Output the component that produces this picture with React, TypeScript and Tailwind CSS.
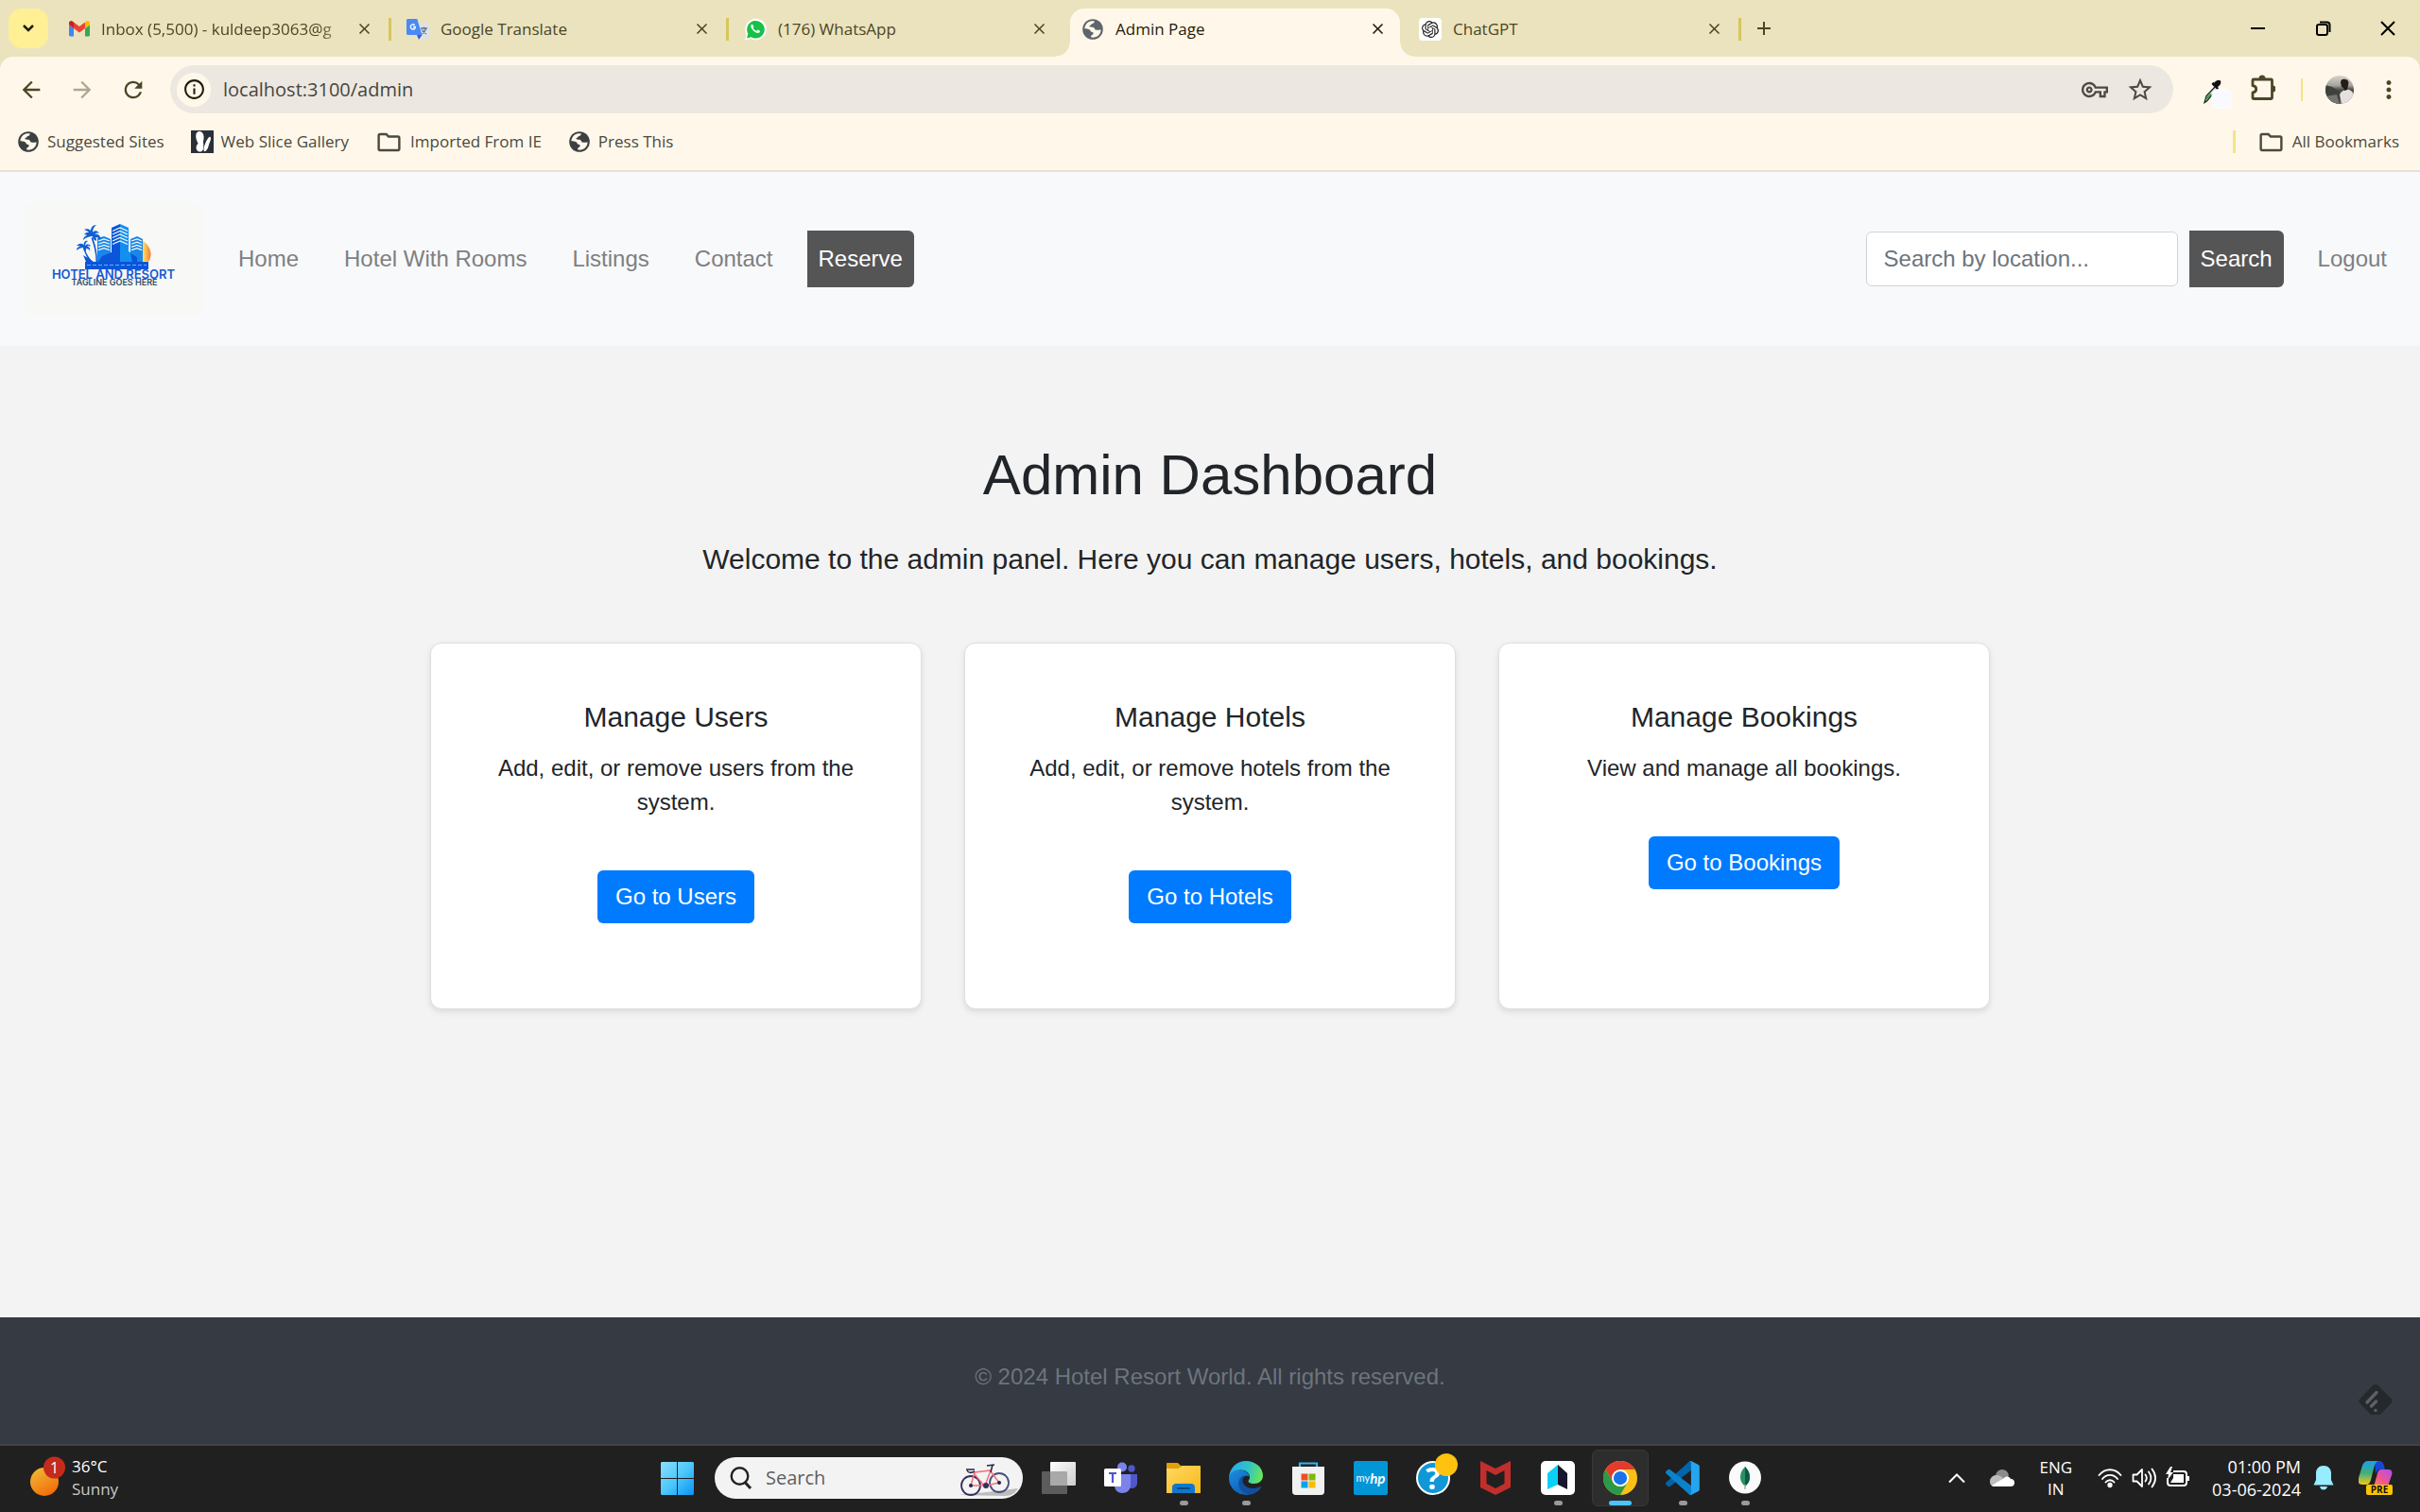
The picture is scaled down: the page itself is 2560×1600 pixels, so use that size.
import React from "react";
import {
  MdArrowBack,
  MdArrowForward,
  MdRefresh,
  MdInfoOutline,
  MdOutlineVpnKey,
  MdStarBorder,
  MdOutlineFolder,
  MdMoreVert,
  MdClose,
  MdAdd,
} from "react-icons/md";
import { SiOpenai } from "react-icons/si";

/* ---------- browser icons ---------- */

function GlobeIcon({ color }: { color: string }) {
  return (
    <svg viewBox="0 0 24 24" className="size-[24px] shrink-0" aria-hidden="true">
      <circle cx="12" cy="12" r="10.8" fill={color} />
      <path
        d="M3.4 11.2c.3-3.900 3-7 6.800-7.900 1.200-.2 2.600-.2 3.600.1-.2 1.400-1 2.200-2.300 2.500-1 .2-1.100 1.500-2 1.800-1 .3-1.500 1.100-.7 1.600 1.300.8 3.100-.1 4.400.9 1 .8.600 2 1.800 2.300 1.900.5 3.900.3 5.500-.3.200 3.700-2.200 7-5.800 8.100-1.600.5-3.200.5-4.700 0 0-1.600.8-2.500 2-2.900 1.100-.4.800-2-.3-2.300-1.600-.4-2.300-1.400-2.600-2.700-1.500-.3-2.400-1.500-5.700-1.200z"
        fill="#fff8ea"
      />
    </svg>
  );
}

function GmailIcon() {
  return (
    <svg viewBox="52 42 88 66" className="w-[22px] shrink-0" aria-hidden="true">
      <path fill="#4285f4" d="M58 108h14V74L52 59v43c0 3.320 2.690 6 6 6" />
      <path fill="#34a853" d="M120 108h14c3.320 0 6-2.690 6-6V59l-20 15" />
      <path fill="#fbbc04" d="M120 48v26l20-15v-8c0-7.420-8.470-11.650-14.400-7.200" />
      <path fill="#ea4335" d="M72 74V48l24 18 24-18v26L96 92" />
      <path fill="#c5221f" d="M52 51v8l20 15V48l-5.600-4.200c-5.940-4.450-14.400-.22-14.400 7.200" />
    </svg>
  );
}

function TranslateIcon() {
  return (
    <svg viewBox="0 0 24 24" className="size-[24px] shrink-0" aria-hidden="true">
      <path d="M10 6h12.500c.8 0 1.500.7 1.500 1.500v13c0 .8-.7 1.500-1.500 1.500H14z" fill="#dfe1e5" />
      <path d="M11 18h5.500L13 23z" fill="#3a5bd0" />
      <path d="M1.500 1h9.800l5.200 17H1.500C.7 18 0 17.300 0 16.500v-14C0 1.700.7 1 1.500 1z" fill="#4a8af4" />
      <path d="M10 8.800H7v1.300h1.600c-.2.800-.8 1.200-1.600 1.200a1.900 1.900 0 1 1 1.200-3.300l1-1A3.300 3.300 0 1 0 7 12.700c1.900 0 3.200-1.400 3-3.900z" fill="#fff" />
      <path d="M15 11h7M18.500 9.500V11M20.500 11c-.5 2.500-2 4.500-4 6M16.500 12.500c.8 2 2.500 3.500 4.500 4.500" stroke="#5f7190" strokeWidth="1.300" fill="none" />
    </svg>
  );
}

function WhatsAppIcon() {
  return (
    <svg viewBox="0 0 24 24" className="size-[24px] shrink-0" aria-hidden="true">
      <path d="M1 23.500l1.700-6A11.300 11.300 0 1 1 7.200 22z" fill="#fff" />
      <path d="M3 21.500l1.300-4.700A9.300 9.300 0 1 1 7.700 20.300z" fill="#16c146" />
      <path
        d="M9.300 7.200c-.3-.6-.9-.6-1.300-.2-1.300 1.200-1.100 3.200 1.600 6 2.900 3.100 5.200 3.500 6.500 2.600.9-.7 1.200-1.600.9-1.900l-2.200-1.100c-.5-.2-.8.900-1.400 1.200-.9.100-3.600-2.200-3.700-3.200.1-.4.800-.9.700-1.400z"
        fill="#fff"
      />
    </svg>
  );
}

function ChatGptIcon() {
  return (
    <span className="flex size-[24px] shrink-0 items-center justify-center rounded-[4px] bg-white">
      <SiOpenai className="size-[18px] text-[#222]" />
    </span>
  );
}

function WebSliceIcon() {
  return (
    <svg viewBox="0 0 24 24" className="size-[24px] shrink-0" aria-hidden="true">
      <rect width="24" height="24" fill="#2a2f36" />
      <path d="M9 1c3.500.3 5 4 4.500 8-.3 2-.7 2.500-.4 4.500.5 3 .4 8.500-2.600 9-3 .6-5-2-5-4.500 0-2 1.500-3 2-4.500C6 11 4.800 7.500 5.300 4.500 5.700 2.300 7 1 9 1z" fill="#fff" />
      <path d="M20.500 7c1.200 1 .2 4-.8 6s-.7 3.500-2 6-2.700 3.800-3.800 2.800c-1-1.300.1-5 1.300-8 1.300-3.300 3.800-8 5.300-6.800z" fill="#fff" />
    </svg>
  );
}

function RestoreIcon() {
  return (
    <svg viewBox="0 0 16 16" className="size-[16px]" fill="none" stroke="#000" strokeWidth="2" aria-hidden="true">
      <rect x="1" y="4" width="11" height="11" rx="2" />
      <path d="M4 1.500h7.500a3 3 0 0 1 3 3V12" />
    </svg>
  );
}

function WindowCloseIcon() {
  return (
    <svg viewBox="0 0 16 16" className="size-[16px]" stroke="#000" strokeWidth="2" aria-hidden="true">
      <path d="M1 1l14 14M15 1L1 15" />
    </svg>
  );
}

function ExtensionsIcon() {
  return (
    <svg viewBox="0 0 26 28" className="h-[28px] w-[26px]" fill="none" aria-hidden="true">
      <path
        d="M3 5h18.500c.6 0 1 .4 1 1v18.500c0 .6-.4 1-1 1H3c-.6 0-1-.4-1-1v-5.700c2.300-.3 3.700-1.700 3.700-3.600S4.300 12 2 11.700V6c0-.6.4-1 1-1z"
        stroke="#4b4626"
        strokeWidth="2.800"
        strokeLinejoin="round"
      />
      <path d="M8.500 4a3.500 3.500 0 0 1 7 0zM23 11.500a3.500 3.500 0 0 1 0 7z" fill="#4b4626" />
    </svg>
  );
}

function EyedropperIcon() {
  return (
    <svg viewBox="0 0 30 34" className="h-[34px] w-[30px]" aria-hidden="true">
      <path d="M13 11L4 20.500 2 27.500l2.500-1.500L14.500 14" fill="#cfe8d4" stroke="#222" strokeWidth="1.300" />
      <path d="M8 18l-4 4-1 4 2-2 5-5z" fill="#2fa14f" />
      <path d="M9.500 8l6 6 1.500-1.500-1-1.500c3-2 4-4.500 3-6.500-1.500-1.500-4.500-1-6.500 2L11 6z" fill="#111" />
      <rect x="10" y="14" width="20" height="20" rx="5" fill="#f8faff" stroke="#fff" />
    </svg>
  );
}

function Avatar() {
  return (
    <svg viewBox="0 0 30 30" className="size-[30px]" role="img" aria-label="Profile">
      <defs>
        <clipPath id="av">
          <circle cx="15" cy="15" r="15" />
        </clipPath>
        <linearGradient id="avbg" x1="0" y1="0" x2="0" y2="1">
          <stop offset="0" stopColor="#d9d4cf" />
          <stop offset=".35" stopColor="#a8a29c" />
          <stop offset=".5" stopColor="#4a4b46" />
          <stop offset="1" stopColor="#5c5e57" />
        </linearGradient>
      </defs>
      <g clipPath="url(#av)">
        <rect width="30" height="30" fill="url(#avbg)" />
        <path d="M0 10l7 2 8 5v13H0z" fill="#3f423b" />
        <path d="M0 22l12-2 3 10H0z" fill="#75776f" />
        <path d="M15 20c2-4 6-6 10-5 3 1 5 4 5 7v8H17z" fill="#e6dfe0" />
        <path d="M16 7c0-3 3-4 5-3 3 0 4 3 3 6l-1 5-3 1-1-3-2-1z" fill="#231c1a" />
      </g>
    </svg>
  );
}

/* ---------- browser chrome ---------- */

type TabInfo = { title: string; icon: React.ReactNode; active?: boolean; fade?: boolean; line?: boolean };

const tabs: TabInfo[] = [
  { title: "Inbox (5,500) - kuldeep3063@g", icon: <GmailIcon />, fade: true, line: true },
  { title: "Google Translate", icon: <TranslateIcon />, line: true },
  { title: "(176) WhatsApp", icon: <WhatsAppIcon /> },
  { title: "Admin Page", icon: <GlobeIcon color="#5f656d" />, active: true },
  { title: "ChatGPT", icon: <ChatGptIcon />, line: true },
];

function Tab({ title, icon, active, fade, line }: TabInfo) {
  return (
    <div
      className={
        active
          ? "relative mx-1 mt-[9px] flex h-[51px] w-[349px] items-center rounded-t-[15px] bg-[#fff8ea] pr-[9px] pb-2 pl-3 text-[#1f1c0a]"
          : "relative mt-[9px] flex h-[51px] w-[357px] items-center pr-[14px] pb-2 pl-4 text-[#4b4626]"
      }
    >
      {active && (
        <>
          <span className="absolute bottom-0 -left-[15px] size-[15px] bg-[radial-gradient(circle_at_0_0,transparent_14px,#fff8ea_15px)]" />
          <span className="absolute -right-[15px] bottom-0 size-[15px] bg-[radial-gradient(circle_at_100%_0,transparent_14px,#fff8ea_15px)]" />
        </>
      )}
      {icon}
      <span
        className={
          fade
            ? "ml-3 flex-1 whitespace-nowrap [mask-image:linear-gradient(to_right,#000_88%,transparent)]"
            : "ml-3 flex-1 whitespace-nowrap"
        }
      >
        {title}
      </span>
      <button type="button" aria-label={`Close ${title}`} className="flex size-[30px] items-center justify-center">
        <MdClose className="size-[19px]" />
      </button>
      {line && <span className="absolute top-[10px] right-0 h-[24px] w-[3px] bg-[#d6c65c]" />}
    </div>
  );
}

function TabStrip() {
  return (
    <div className="flex h-[60px] bg-[#ebe3be]">
      <button type="button" aria-label="Search tabs" className="mt-[9px] ml-[9px] flex h-[42px] w-[42px] items-center justify-center rounded-[14px] bg-[#fff095]">
        <svg viewBox="0 0 14 10" className="w-[14px]" fill="none" stroke="#1f1c0a" strokeWidth="2.500" aria-hidden="true">
          <path d="M2 2l5 5 5-5" />
        </svg>
      </button>
      <div className="ml-[6px] flex">
        {tabs.map((t) => (
          <Tab key={t.title} {...t} />
        ))}
      </div>
      <button type="button" aria-label="New tab" className="ml-3 flex h-[60px] w-[24px] items-center justify-center text-[#4b4626]">
        <MdAdd className="size-[24px] shrink-0" />
      </button>
      <div className="ml-auto flex h-[60px] items-center">
        <button type="button" aria-label="Minimize" className="flex h-[60px] w-[69px] items-center justify-center">
          <span className="h-[2px] w-[15px] bg-black" />
        </button>
        <button type="button" aria-label="Restore" className="flex h-[60px] w-[69px] items-center justify-center">
          <RestoreIcon />
        </button>
        <button type="button" aria-label="Close window" className="flex h-[60px] w-[68px] items-center justify-center">
          <WindowCloseIcon />
        </button>
      </div>
    </div>
  );
}

function Toolbar() {
  return (
    <div className="flex h-[69px] items-center pr-[18px] pl-[19px] text-[#4b4626]">
      <div className="flex gap-[26px]">
        <button type="button" aria-label="Back"><MdArrowBack className="size-[28px]" /></button>
        <button type="button" aria-label="Forward"><MdArrowForward className="size-[28px] text-[#aca88f]" /></button>
        <button type="button" aria-label="Reload"><MdRefresh className="size-[28px]" /></button>
      </div>
      <div className="ml-[25px] flex h-[51px] flex-1 items-center rounded-full bg-[#ece8e1] pr-[20px] pl-[7px]">
        <button type="button" aria-label="Site information" className="flex size-[36px] items-center justify-center rounded-full bg-[#fff8ea] text-[#1f1c0a]">
          <MdInfoOutline className="size-[25px]" />
        </button>
        <input
          aria-label="Address"
          defaultValue="localhost:3100/admin"
          className="ml-[13px] min-w-0 flex-1 bg-transparent text-[20px] text-[#474540] outline-none"
        />
        <button type="button" aria-label="Passwords"><MdOutlineVpnKey className="size-[28px] text-[#4d4a42]" /></button>
        <button type="button" aria-label="Bookmark this page" className="ml-[19px]"><MdStarBorder className="size-[30px] text-[#4d4a42]" /></button>
      </div>
      <button type="button" aria-label="Color picker" className="ml-[31px] pt-[6px]"><EyedropperIcon /></button>
      <button type="button" aria-label="Extensions" className="ml-[21px] pb-1"><ExtensionsIcon /></button>
      <span className="ml-[27px] h-[24px] w-[2px] bg-[#f3e485]" />
      <button type="button" aria-label="Profile" className="ml-[24px]"><Avatar /></button>
      <button type="button" aria-label="Menu" className="ml-[22px]"><MdMoreVert className="size-[30px]" /></button>
    </div>
  );
}

function Bookmarks() {
  return (
    <nav aria-label="Bookmarks" className="flex h-[51px] items-center pr-[22px] pb-[9px] pl-[18px] text-[17px] text-[#4b4840]">
      <a href="#suggested" className="flex items-center gap-2"><GlobeIcon color="#3c4043" />Suggested Sites</a>
      <a href="#slice" className="ml-[28px] flex items-center gap-2"><WebSliceIcon />Web Slice Gallery</a>
      <a href="#ie" className="ml-[28px] flex items-center gap-2"><MdOutlineFolder className="size-[29px]" />Imported From IE</a>
      <a href="#press" className="ml-[28px] flex items-center gap-2"><GlobeIcon color="#3c4043" />Press This</a>
      <span className="ml-auto h-[24px] w-[3px] bg-[#f3e485]" />
      <a href="#all" className="ml-[23px] flex items-center gap-2"><MdOutlineFolder className="size-[29px]" />All Bookmarks</a>
    </nav>
  );
}

/* ---------- hotel site ---------- */

function HotelLogo() {
  const rows = [0, 1, 2, 3, 4, 5];
  return (
    <svg viewBox="0 0 192 120" className="h-[120px] w-[192px] rounded-[12px] bg-[#f8f8f6]" role="img" aria-label="Hotel and Resort">
      <defs>
        <linearGradient id="sun" x1="0" x2="1">
          <stop offset="0" stopColor="#ffe45c" />
          <stop offset="1" stopColor="#f9793a" />
        </linearGradient>
      </defs>
      <path d="M127 41c5 3 8 8 8.500 13 .2 3-.5 6-2 8.500H127z" fill="url(#sun)" />
      <path d="M94 27l9-4v40h-9z" fill="#0a55d8" />
      <path d="M103 23l9 4v36h-9z" fill="#1290f0" />
      <path d="M79 38l7-2 7 3v24H79z" fill="#1a86ea" />
      <path d="M84 57l10-4v10H80z" fill="#0a55d8" />
      <path d="M114 39l7-3 6 3v24h-13z" fill="#1a86ea" />
      <path d="M112 52l9 5v6h-9z" fill="#1290f0" />
      <path d="M114 54l7 4v5h-5z" fill="#0a55d8" />
      <g stroke="#f8f8f6" strokeWidth="1.200" fill="none">
        {rows.slice(0, 5).map((r) => (
          <path key={r} d={`M95 ${30.5 + r * 3.5}l8-3.500 8 3.500`} />
        ))}
        {rows.slice(0, 4).map((r) => (
          <path key={`l${r}`} d={`M80 ${41 + r * 3.2}l6-2 6 2`} />
        ))}
        {rows.slice(0, 4).map((r) => (
          <path key={`r${r}`} d={`M115 ${41 + r * 3.2}l6-2 5 2`} />
        ))}
      </g>
      <path d="M64 56l11 7h-8zM74 37c3 8 5 17 5 26h-1.500c0-9-2-17-5-25z" fill="#0a55d8" />
      <path d="M65 48c2 6 5 11 9 15h-3c-3-4-5-9-7-14z" fill="#0a55d8" />
      <path d="M74 35c-2-4-6-4-9-1 2 0 3 1 3 1-3 1-4 3-4 5 3-3 7-4 10-4 0 2 1 4 4 5 0-2 0-3-1-4 3 0 5 2 5 3 1-4-2-7-6-6 1-1 3-2 5-1-2-4-6-3-7-1 0-3 1-6 4-8-4 0-6 3-6 6-2-2-5-2-7-1 3 1 6 3 9 6z" fill="#0f5fd6" />
      <path d="M65 46c-1-3-5-3-8 0 2 0 3 0 4 1-3 0-4 2-4 4 2-2 5-3 7-3 0 2 1 3 3 4v-3c2 0 4 1 4 3 1-3-1-5-3-6 2 0 3 0 4 1-1-3-4-3-6-1 0-2 1-4 3-5-3-1-5 2-4 5z" fill="#0f5fd6" />
      <rect x="66" y="63" width="67" height="8" fill="#0a55d8" />
      <path d="M68 66.500h63" stroke="#5fb4ff" strokeDasharray="4 2" />
      <text x="96" y="81" textAnchor="middle" fontSize="13" fontWeight="600" fill="#1559d6" className="font-[Inter,sans-serif]">
        HOTEL AND RESORT
      </text>
      <text x="97" y="88" textAnchor="middle" fontSize="9" fontWeight="600" fill="#2d4d68" className="font-[Inter,sans-serif]">
        TAGLINE GOES HERE
      </text>
    </svg>
  );
}

const navLinks = ["Home", "Hotel With Rooms", "Listings", "Contact"];

function SiteHeader() {
  return (
    <header className="flex items-center bg-[#f8f9fb] py-8 pr-[23px] pl-6 text-[24px] leading-[36px] text-[#7f7f80]">
      <a href="#home" className="mr-6"><HotelLogo /></a>
      <nav className="flex items-center gap-6" aria-label="Main">
        {navLinks.map((l) => (
          <a key={l} href={`#${l}`} className="px-3 py-3">{l}</a>
        ))}
        <a href="#reserve" className="rounded-r-[6px] bg-[#555] px-3 py-3 text-white">Reserve</a>
      </nav>
      <form className="ml-auto flex items-center gap-3" onSubmit={(e) => e.preventDefault()}>
        <input
          aria-label="Search by location"
          placeholder="Search by location..."
          className="h-[58px] w-[330px] rounded-[6px] border border-[#ced4da] bg-white px-[18px] text-[#495057] placeholder:text-[#6c757d]"
        />
        <button type="submit" className="rounded-r-[6px] bg-[#555] px-3 py-3 text-white">Search</button>
      </form>
      <a href="#logout" className="ml-6 px-3 py-3">Logout</a>
    </header>
  );
}

const cards = [
  { title: "Manage Users", text: "Add, edit, or remove users from the system.", action: "Go to Users" },
  { title: "Manage Hotels", text: "Add, edit, or remove hotels from the system.", action: "Go to Hotels" },
  { title: "Manage Bookings", text: "View and manage all bookings.", action: "Go to Bookings" },
];

function Dashboard() {
  return (
    <main className="flex-1 bg-[#f3f3f3] px-6 pt-[101px] text-center text-[#212529]">
      <h1 className="text-[60px] leading-[72px]">Admin Dashboard</h1>
      <p className="mt-[31px] text-[30px] leading-[44px]">
        Welcome to the admin panel. Here you can manage users, hotels, and bookings.
      </p>
      <div className="mx-auto mt-[66px] grid max-w-[1650px] grid-cols-3 gap-[45px]">
        {cards.map((c) => (
          <section key={c.title} className="rounded-[12px] border border-[#dfdfdf] bg-white px-[60px] pt-[60px] pb-[90px] shadow-[0_3px_6px_rgba(0,0,0,0.1)]">
            <h2 className="text-[30px] leading-[36px]">{c.title}</h2>
            <p className="mt-[18px] text-[24px] leading-[36px]">{c.text}</p>
            <a href={`#${c.action}`} className="mt-[54px] inline-block rounded-[6px] bg-[#007bff] px-[19px] py-[10px] text-[24px] leading-[36px] text-white">
              {c.action}
            </a>
          </section>
        ))}
      </div>
    </main>
  );
}

function SiteFooter() {
  return (
    <footer className="relative bg-[#363a43] pt-[45px] pb-[53px] text-center text-[24px] leading-[36px] text-[#6c757d]">
      <p>© 2024 Hotel Resort World. All rights reserved.</p>
      <svg viewBox="0 0 36 34" className="absolute right-[29px] bottom-[30px] h-[34px] w-[36px]" aria-hidden="true">
        <path d="M15 2.200c1.700-1.700 4.300-1.700 6 0L34.500 16c1.500 1.500 1.500 3.500 0 5L23 33H13L1.500 21c-1.500-1.500-1.500-3.500 0-5z" fill="#25282d" />
        <g stroke="#5d6066" strokeWidth="3.500" strokeLinecap="round">
          <path d="M9 20L19 9.500M13.500 24l5-5M18 28.500v0" />
        </g>
      </svg>
    </footer>
  );
}

/* ---------- taskbar ---------- */

function BikeIcon() {
  return (
    <svg viewBox="0 0 64 44" className="h-[44px] w-[64px] shrink-0" fill="none" aria-hidden="true">
      <path d="M0 40l30-3 33-4c-3 5-7 8-14 8z" fill="#bdbdbd" />
      <circle cx="13" cy="30" r="10" stroke="#342f5c" strokeWidth="1.800" />
      <circle cx="43" cy="27" r="10" stroke="#47507f" strokeWidth="1.800" />
      <path d="M13 30l4-14 17-2-6 16zM17 18l10 12M34 15l9 12-14 3" stroke="#f3717c" strokeWidth="1.500" />
      <path d="M9 14c2 4 6 2 8 1M8 13h9M34 16l2-8M30 9l8-1" stroke="#272244" strokeWidth="1.500" />
      <circle cx="29" cy="30" r="3" fill="#33305a" />
      <circle cx="13" cy="30" r="2" fill="#272244" />
      <circle cx="43" cy="27" r="2" fill="#272244" />
    </svg>
  );
}

function TaskViewIcon() {
  return (
    <svg viewBox="0 0 36 36" className="size-[36px]" aria-hidden="true">
      <defs>
        <linearGradient id="tv" x1="0" y1="0" x2="1" y2="1">
          <stop offset="0" stopColor="#fff" />
          <stop offset="1" stopColor="#ccc" />
        </linearGradient>
      </defs>
      <rect x="0" y="11" width="27" height="24" rx="1" fill="#5c5c5c" />
      <rect x="9" y="1" width="27" height="25" rx="1" fill="url(#tv)" />
      <path d="M9 11h18v15H9z" fill="#a9a9a9" />
    </svg>
  );
}

function TeamsIcon() {
  return (
    <svg viewBox="0 0 36 36" className="size-[36px]" aria-hidden="true">
      <circle cx="29" cy="8" r="3.700" fill="#4f57c9" />
      <circle cx="19" cy="6.500" r="5" fill="#7b83eb" />
      <path d="M25 14h10v9c0 4-3 6-6 6s-4-1-4-1z" fill="#4f57c9" />
      <path d="M11 14h17v11c0 6-4 9-9 9-4 0-8-3-8-8z" fill="#7b83eb" />
      <rect x="0" y="8" width="18" height="19" rx="1.500" fill="#fff" />
      <path d="M5 13h8M9 13v10" stroke="#4f57c9" strokeWidth="2.200" />
    </svg>
  );
}

function ExplorerIcon() {
  return (
    <svg viewBox="0 0 36 36" className="size-[36px]" aria-hidden="true">
      <defs>
        <linearGradient id="fe" x1="0" y1="0" x2="1" y2="1">
          <stop offset="0" stopColor="#ffd865" />
          <stop offset="1" stopColor="#f9b916" />
        </linearGradient>
      </defs>
      <path d="M0 3c0-.8.500-1 1-1h11l4 4H36v4H0z" fill="#e2a008" />
      <path d="M0 8h13l3-3h19c.6 0 1 .4 1 1v28H0z" fill="url(#fe)" />
      <path d="M6 34v-6c0-3 2-4 4-4h16c3 0 4 2 4 4v6z" fill="#1277cc" />
      <path d="M11 29h14" stroke="#0b4a86" strokeWidth="2" />
    </svg>
  );
}

function EdgeIcon() {
  return (
    <svg viewBox="0 0 36 36" className="size-[36px]" aria-hidden="true">
      <defs>
        <linearGradient id="e1" x1="0" y1=".3" x2="1" y2=".5">
          <stop offset="0" stopColor="#2aa8ea" />
          <stop offset=".55" stopColor="#2fc4c8" />
          <stop offset="1" stopColor="#6be655" />
        </linearGradient>
        <linearGradient id="e2" x1="0" y1="0" x2=".6" y2="1">
          <stop offset="0" stopColor="#1b8fe0" />
          <stop offset="1" stopColor="#0f5fb8" />
        </linearGradient>
      </defs>
      <path d="M0 17C1 7 8.500 0 18 0c10 0 18 7 18 15.500 0 5.500-4.500 8.500-9 8.500-4 0-6.500-1.300-6.500-2.600 0-.9 1.500-1.600 1.500-4.400 0-4-4-7.500-9.500-7.500C6 9.500 1.500 13 0 17z" fill="url(#e1)" />
      <path d="M0 18c0-5 6-9 12-8.500 5.500.4 9 3.500 9.500 7C17 14 12 18 12 23c0 7 6 12 11 12.500C11 38 0 30 0 18z" fill="url(#e2)" />
      <path d="M11 20c-3 7 3 15 12 15.500 5-1 9-4 11-7.500.4-.7-.3-1.200-1-.8-8 4-18 1-18.500-6.200 0-2.500 1.500-4.500 3.500-5.500-3-.5-5.800 1.500-7 4.500z" fill="#124f9e" />
    </svg>
  );
}

function StoreIcon() {
  return (
    <svg viewBox="0 0 36 36" className="size-[36px]" aria-hidden="true">
      <path d="M9 8V2.500h18V8" fill="none" stroke="#35b3f3" strokeWidth="2.200" />
      <path d="M1 6h34v26c0 2.500-1 4-4 4H5c-3 0-4-1.500-4-4z" fill="#f1f1f1" />
      <path d="M10.500 13.500h7v7h-7z" fill="#f04e23" />
      <path d="M18.500 13.500h7v7h-7z" fill="#7fba00" />
      <path d="M10.500 21.500h7v7h-7z" fill="#00a4ef" />
      <path d="M18.500 21.500h7v7h-7z" fill="#ffb900" />
    </svg>
  );
}

function MyHpIcon() {
  return (
    <span className="flex size-[36px] items-center justify-center rounded-[2px] bg-[#0396d6] font-[Lato,sans-serif] text-[11px] text-white">
      my<b className="text-[15px] italic">hp</b>
    </span>
  );
}

function HelpIcon() {
  return (
    <span className="relative flex size-[36px] items-center justify-center rounded-full border-2 border-white bg-[#0f97d7] font-['Open_Sans',sans-serif] text-[32px] leading-none font-bold text-white">
      ?
      <span className="absolute -top-[10px] -right-[10px] size-[24px] rounded-full bg-[#ffc20e]" />
    </span>
  );
}

function McAfeeIcon() {
  return (
    <svg viewBox="0 0 36 36" className="size-[36px]" aria-hidden="true">
      <path d="M2 0l16 8L34 0v28l-16 8-16-8zM8.500 10v14L18 29l9.500-5V10L18 15z" fill="#c12e2c" fillRule="evenodd" />
    </svg>
  );
}

function PanelAppIcon() {
  return (
    <svg viewBox="0 0 36 36" className="size-[36px]" aria-hidden="true">
      <rect width="36" height="36" rx="5" fill="#fff" />
      <path d="M18 4v21L7 30V13z" fill="#0bd0f5" />
      <path d="M18 4l10 9v17l-10-5z" fill="#17172c" />
    </svg>
  );
}

function ChromeIcon() {
  return (
    <svg viewBox="0 0 48 48" className="size-[36px]" aria-hidden="true">
      <circle cx="24" cy="24" r="24" fill="#fbc116" />
      <path d="M24 12h20.800A24 24 0 0 0 3.200 12l10.400 18z" fill="#e33b2e" />
      <path d="M3.200 12A24 24 0 0 0 24 48l10.400-18A12 12 0 0 1 13.600 30z" fill="#2a9a48" />
      <circle cx="24" cy="24" r="12" fill="#fff" />
      <circle cx="24" cy="24" r="9.500" fill="#1a73e8" />
    </svg>
  );
}

function VsCodeIcon() {
  return (
    <svg viewBox="0 0 100 100" className="size-[36px]" aria-hidden="true">
      <path d="M96 11L75.500 1A6 6 0 0 0 68.500 2L1.400 63.500a4.200 4.200 0 0 0 0 6.200l5.500 5a4.200 4.200 0 0 0 5.300.2L93 13.700a4.200 4.200 0 0 1 6.700 3.300z" fill="#0065a9" />
      <path d="M96 89L75.500 99a6 6 0 0 1-7-1L1.400 36.500a4.200 4.200 0 0 1 0-6.200l5.500-5a4.200 4.200 0 0 1 5.300-.2L93 86.300a4.200 4.200 0 0 0 6.700-3.300z" fill="#0b82cc" />
      <path d="M75.500 99a6 6 0 0 1-7-1.200c2.300 2.300 6.200.7 6.200-2.500V4.700c0-3.200-3.900-4.800-6.200-2.500a6 6 0 0 1 7-1.200l20.600 10A6 6 0 0 1 99.500 16.500v67a6 6 0 0 1-3.400 5.500z" fill="#27a4f0" />
    </svg>
  );
}

function MongoIcon() {
  return (
    <svg viewBox="0 0 36 36" className="size-[36px]" aria-hidden="true">
      <circle cx="18" cy="17.500" r="17" fill="#fafafa" />
      <path d="M18 6c3.500 3.500 5 7 5 11 0 5-2.500 7.500-5 10-2.500-2.500-5-5-5-10 0-4 1.500-7.500 5-11z" fill="#2f8f63" />
      <path d="M18 6c3.500 3.500 5 7 5 11 0 5-2.500 7.500-5 10z" fill="#0a5c46" />
      <path d="M18 25v5" stroke="#9ab8aa" strokeWidth="1.500" />
    </svg>
  );
}

const apps: { name: string; icon: React.ReactNode; state?: "open" | "active" }[] = [
  { name: "Task view", icon: <TaskViewIcon /> },
  { name: "Teams", icon: <TeamsIcon /> },
  { name: "File Explorer", icon: <ExplorerIcon />, state: "open" },
  { name: "Edge", icon: <EdgeIcon />, state: "open" },
  { name: "Store", icon: <StoreIcon /> },
  { name: "myHP", icon: <MyHpIcon /> },
  { name: "Help", icon: <HelpIcon /> },
  { name: "McAfee", icon: <McAfeeIcon /> },
  { name: "Panels", icon: <PanelAppIcon />, state: "open" },
  { name: "Chrome", icon: <ChromeIcon />, state: "active" },
  { name: "VS Code", icon: <VsCodeIcon />, state: "open" },
  { name: "MongoDB Compass", icon: <MongoIcon />, state: "open" },
];

function Taskbar() {
  return (
    <footer className="grid h-[72px] grid-cols-[1fr_auto_1fr] items-center border-t-2 border-[#434343] bg-[#202020] pb-[2px] font-['Open_Sans',sans-serif] text-[17px] leading-[24px] text-white">
      <button type="button" className="flex items-center gap-[7px] pl-[31px] text-left">
        <svg viewBox="0 0 38 44" className="mb-1 h-[44px] w-[38px]" aria-hidden="true">
          <defs>
            <linearGradient id="wx" x1=".1" y1="0" x2=".7" y2="1">
              <stop offset="0" stopColor="#f1bd35" />
              <stop offset="1" stopColor="#f26a0b" />
            </linearGradient>
          </defs>
          <circle cx="16" cy="28" r="15" fill="url(#wx)" />
          <circle cx="26.500" cy="13" r="11.500" fill="#c42b1c" />
          <text x="26.500" y="19" textAnchor="middle" fontSize="16" fill="#fff">1</text>
        </svg>
        <span>
          <span className="block">36°C</span>
          <span className="block text-[#c9c9c9]">Sunny</span>
        </span>
      </button>

      <div className="flex items-center pl-[2px]">
        <button type="button" aria-label="Start" className="flex size-[60px] items-center justify-center">
          <svg viewBox="0 0 35 35" className="size-[35px]" aria-hidden="true">
            <defs>
              <linearGradient id="win" x1="0" y1="0" x2="1" y2="1">
                <stop offset="0" stopColor="#8be0ff" />
                <stop offset=".5" stopColor="#4cc8fb" />
                <stop offset="1" stopColor="#0a93f5" />
              </linearGradient>
            </defs>
            <path d="M1 0h16v17H0V1zM18 0h16l1 1v16H18zM0 18h17v17H1l-1-1zM18 18h17v16l-1 1H18z" fill="url(#win)" />
          </svg>
        </button>
        <label className="ml-[10px] flex h-[44px] w-[326px] items-center overflow-hidden rounded-full bg-[#f3f3f3] pr-[4px] pl-4">
          <svg viewBox="0 0 24 28" className="h-[28px] w-[24px] shrink-0" fill="none" stroke="#222" strokeWidth="2.400" aria-hidden="true">
            <circle cx="10.500" cy="12" r="8.800" />
            <path d="M16 18.500l6 6.500" strokeWidth="3" />
          </svg>
          <input type="text" placeholder="Search" className="ml-[14px] w-0 flex-1 bg-transparent text-[20px] placeholder:text-[#5f5f5f]" aria-label="Search" />
          <BikeIcon />
        </label>
        <div className="ml-2 flex gap-[6px]">
          {apps.map((a) => (
            <button
              key={a.name}
              type="button"
              aria-label={a.name}
              className={
                a.state === "active"
                  ? "relative flex size-[60px] items-center justify-center rounded-[6px] border border-[#383838] bg-[#2d2d2d]"
                  : "relative flex size-[60px] items-center justify-center"
              }
            >
              {a.icon}
              {a.state === "open" && <span className="absolute bottom-[1px] h-[5px] w-[9px] rounded-full bg-[#9a9a9a]" />}
              {a.state === "active" && <span className="absolute bottom-0 h-[5px] w-[24px] rounded-full bg-[#4cc2ff]" />}
            </button>
          ))}
        </div>
      </div>

      <div className="flex items-center justify-end pr-[29px]">
        <svg viewBox="0 0 18 12" className="w-[18px]" fill="none" stroke="#fff" strokeWidth="2" aria-label="Hidden icons">
          <path d="M1 10.500l8-8 8 8" />
        </svg>
        <svg viewBox="0 0 26 20" className="ml-[26px] w-[26px]" aria-label="OneDrive">
          <path d="M6 8a7 7 0 0 1 14 0l-8 6z" fill="#8b8b8b" />
          <path d="M6 7c3-.5 5 .5 8 3l-9 9C1 19 0 16 0 13.500 0 10 3 7.500 6 7z" fill="#bdbdbd" />
          <path d="M2 18l13-8c2-2.500 6-2 7 1 3 0 4 2 4 4 0 3-2 4-4 4H5c-1 0-2 0-3-1z" fill="#fff" />
        </svg>
        <button type="button" className="ml-[26px] text-center leading-[23px]">
          <span className="block">ENG</span>
          <span className="block">IN</span>
        </button>
        <span className="ml-[27px] flex items-center gap-[10px]">
          <svg viewBox="0 0 26 22" className="w-[26px]" fill="none" stroke="#fff" strokeWidth="1.900" strokeLinecap="round" aria-label="Wi-Fi">
            <path d="M1.500 8C8 .3 18 .3 24.500 8M5 12c4.500-5.500 11.500-5.500 16 0M8.500 15.500c2.500-3 6.500-3 9 0" />
            <circle cx="13" cy="18.500" r="1.700" fill="#fff" />
          </svg>
          <svg viewBox="0 0 26 24" className="w-[26px]" fill="none" stroke="#fff" strokeWidth="1.800" strokeLinecap="round" strokeLinejoin="round" aria-label="Volume">
            <path d="M1.500 8.500h4L11 3v18l-5.500-5.500h-4zM14.500 8.500c1.500 2 1.500 5 0 7M18 5.500c3 4 3 9 0 13M21.500 2.500c4.500 6 4.500 13 0 19" />
          </svg>
          <svg viewBox="0 0 26 24" className="w-[26px]" fill="none" stroke="#fff" strokeWidth="2" aria-label="Battery">
            <path d="M8 5h11c2 0 3 1 3 3v9c0 2-1 3-3 3H5c-2 0-3-1-3-3v-5" />
            <path d="M8 8h11v9H5l3-5z" fill="#fff" stroke="none" />
            <path d="M23.500 10v5" strokeWidth="3" />
            <path d="M5 0L0 8h3l-1 6 6-8H5l2-6z" fill="#fff" stroke="none" />
          </svg>
        </span>
        <button type="button" className="ml-[23px] text-right text-[18px]">
          <span className="block">01:00 PM</span>
          <span className="block">03-06-2024</span>
        </button>
        <svg viewBox="0 0 22 26" className="ml-[13px] w-[22px]" fill="#99ebff" aria-label="Notifications">
          <path d="M11 0c5 0 8 3.500 8 8v7l2.500 5.500H.5L3 15V8c0-4.500 3-8 8-8zM7 22h8c-.5 2.500-2 3.500-4 3.500S7.500 24.500 7 22z" />
        </svg>
        <svg viewBox="0 0 36 36" className="ml-[26px] w-[36px]" aria-label="Copilot">
          <defs>
            <linearGradient id="cp1" x1="0" y1="0" x2="0" y2="1">
              <stop offset="0" stopColor="#1a9fee" />
              <stop offset=".5" stopColor="#3fae7a" />
              <stop offset="1" stopColor="#f2c81d" />
            </linearGradient>
            <linearGradient id="cp2" x1="1" y1="0" x2="0" y2="1">
              <stop offset="0" stopColor="#b04ef0" />
              <stop offset=".5" stopColor="#f0568f" />
              <stop offset="1" stopColor="#ff9e4a" />
            </linearGradient>
          </defs>
          <path d="M17 0h5c3 0 4 2 5 5l1 4h-5c-3 0-4 2-5 5z" fill="#1746d8" />
          <path d="M10 0h11c-3 1-4 4-5 8l-3 12c-1 3-2 5-5 5H4c-4 0-5-3-4-7L4 5c1-3 3-5 6-5z" fill="url(#cp1)" />
          <path d="M24 9h8c3 0 4 3 3 6l-3 9c-1 4-3 6-6 6H12c3-1 4-3 5-6l3-11c1-3 2-4 4-4z" fill="url(#cp2)" />
          <rect x="8" y="25" width="28" height="11" rx="2" fill="#fcc500" />
          <text x="22" y="34" textAnchor="middle" fontSize="10" fontWeight="700" fill="#111">PRE</text>
        </svg>
      </div>
    </footer>
  );
}

export default function App() {
  return (
    <div className="flex min-h-screen flex-col font-['Liberation_Sans',Arial,sans-serif]">
      <div className="bg-[#ebe3be] font-['Open_Sans',sans-serif] text-[17px]">
        <TabStrip />
        <div className="rounded-t-[14px] border-b-2 border-[#e8e1cf] bg-[#fff8ea]">
          <Toolbar />
          <Bookmarks />
        </div>
      </div>
      <SiteHeader />
      <Dashboard />
      <SiteFooter />
      <Taskbar />
    </div>
  );
}
